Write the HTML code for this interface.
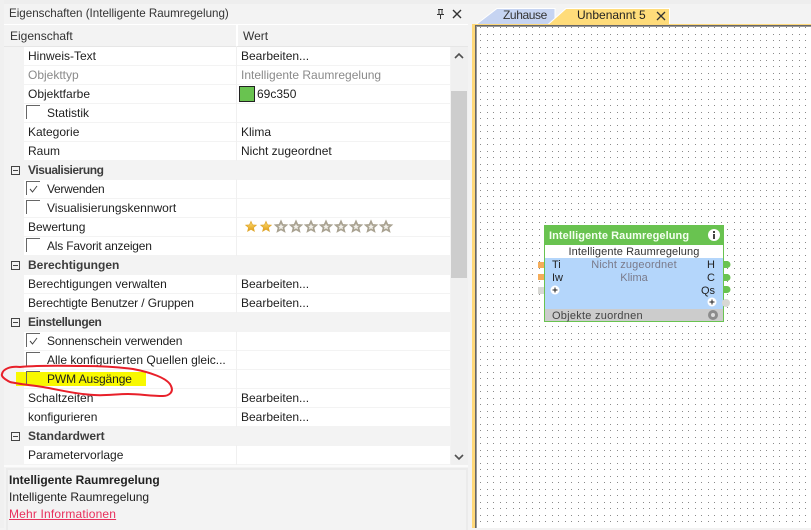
<!DOCTYPE html>
<html><head><meta charset="utf-8"><style>
html,body{margin:0;padding:0}
body{width:811px;height:528px;position:relative;overflow:hidden;background:#f3f3f3;font:12px/18px "Liberation Sans",sans-serif;color:#1e1e1e}
div,span{position:absolute;white-space:nowrap}
.r{left:24px;width:426px;height:18px;background:#fff}
.r::after{content:"";position:absolute;left:212px;top:-1px;height:20px;width:1px;background:#f0f0f0}
.n{left:4px;top:0}
.c{left:23px;top:0}
.v{left:217px;top:0}
.g{left:28px;font-weight:bold;color:#3c3c3c;height:18px}
.b{left:26px;top:2px;width:13px;height:13px;border-left:1px solid #666;border-top:1px solid #666}
.m{left:11px;width:7px;height:7px;border:1px solid #444}
.m::after{content:"";position:absolute;left:1px;top:3px;width:5px;height:1px;background:#444}
.b svg{position:absolute;left:2px;top:3px}
.gr{color:#8a8a8a}
.node{font:11px/13px "Liberation Sans",sans-serif}
</style></head><body>
<div style="left:0;top:0;width:811px;height:4px;background:#eeeeee"></div>
<div style="left:0;top:0;width:4px;height:528px;background:#f0f0f0"></div>
<div style="left:9px;top:5px;color:#333;font-size:11.6px">Eigenschaften (Intelligente Raumregelung)</div>
<svg style="position:absolute;left:434px;top:8px" width="34" height="12"><path d="M4 1.5h5M5 1.5v5M8 1.5v5M3 6.5h7M6.5 7v4" stroke="#333" fill="none"/><path d="M19 2l8 8M27 2l-8 8" stroke="#333" stroke-width="1.4" fill="none"/></svg>
<div style="left:4px;top:24px;width:464px;height:1px;background:#fff"></div>
<div style="left:236px;top:25px;width:2px;height:21px;background:#fff"></div>
<div style="left:10px;top:27px;color:#333">Eigenschaft</div>
<div style="left:243px;top:27px;color:#333">Wert</div>
<div style="left:4px;top:46px;width:464px;height:1px;background:#e6e6e6"></div>

<div class="r" style="top:47px"><span class="n">Hinweis-Text</span><span class="v">Bearbeiten...</span></div>
<div class="r gr" style="top:66px"><span class="n">Objekttyp</span><span class="v">Intelligente Raumregelung</span></div>
<div class="r" style="top:85px"><span class="n">Objektfarbe</span><span class="v" style="left:233px">69c350</span></div>
<div style="left:239px;top:86px;width:14px;height:14px;background:#69c350;border:1px solid #222"></div>
<div class="r" style="top:104px"><span class="c">Statistik</span></div><div class="b" style="top:105px"></div>
<div class="r" style="top:123px"><span class="n">Kategorie</span><span class="v">Klima</span></div>
<div class="r" style="top:142px"><span class="n">Raum</span><span class="v">Nicht zugeordnet</span></div>
<div class="m" style="top:166px"></div><div class="g" style="top:161px;letter-spacing:-.45px">Visualisierung</div>
<div class="r" style="top:180px"><span class="c" style="letter-spacing:-.3px">Verwenden</span></div><div class="b" style="top:181px"><svg width="9" height="8"><path d="M1 4l2.500 3L8 1" stroke="#444" fill="none"/></svg></div>
<div class="r" style="top:199px"><span class="c">Visualisierungskennwort</span></div><div class="b" style="top:200px"></div>
<div class="r" style="top:218px"><span class="n">Bewertung</span></div>
<svg style="position:absolute;left:243px;top:219px" width="152" height="16">
<defs><linearGradient id="au" x1="0" y1="0" x2="0" y2="1"><stop offset="0" stop-color="#ffe27a"/><stop offset="1" stop-color="#e09a10"/></linearGradient>
<path id="st" d="M8 2.500l1.500 3.400 3.700.3-2.800 2.400.9 3.600L8 10.300l-3.300 1.900.9-3.600-2.800-2.400 3.700-.3z"/></defs>
<use href="#st" fill="url(#au)" stroke="#e0a830" stroke-width=".8"/>
<use href="#st" x="15" fill="url(#au)" stroke="#e0a830" stroke-width=".8"/>
<g fill="#f2f0ea" stroke="#a8a190" stroke-width="1.7"><use href="#st" x="30"/><use href="#st" x="45"/><use href="#st" x="60"/><use href="#st" x="75"/><use href="#st" x="90"/><use href="#st" x="105"/><use href="#st" x="120"/><use href="#st" x="135"/></g></svg>
<div class="r" style="top:237px"><span class="c" style="letter-spacing:-.2px">Als Favorit anzeigen</span></div><div class="b" style="top:238px"></div>
<div class="m" style="top:261px"></div><div class="g" style="top:256px">Berechtigungen</div>
<div class="r" style="top:275px"><span class="n">Berechtigungen verwalten</span><span class="v">Bearbeiten...</span></div>
<div class="r" style="top:294px"><span class="n" style="letter-spacing:-.1px">Berechtigte Benutzer / Gruppen</span><span class="v">Bearbeiten...</span></div>
<div class="m" style="top:318px"></div><div class="g" style="top:313px;letter-spacing:-.4px">Einstellungen</div>
<div class="r" style="top:332px"><span class="c" style="letter-spacing:-.13px">Sonnenschein verwenden</span></div><div class="b" style="top:333px"><svg width="9" height="8"><path d="M1 4l2.500 3L8 1" stroke="#444" fill="none"/></svg></div>
<div class="r" style="top:351px"><span class="c">Alle konfigurierten Quellen gleic...</span></div><div class="b" style="top:352px"></div>
<div class="r" style="top:370px"></div>
<div style="left:16px;top:372px;width:130px;height:14px;background:#f8f800"></div>
<div style="left:47px;top:370px;letter-spacing:-.1px">PWM Ausgänge</div>
<div class="b" style="top:371px"></div>
<div class="r" style="top:389px"><span class="n">Schaltzeiten</span><span class="v">Bearbeiten...</span></div>
<div class="r" style="top:408px"><span class="n">konfigurieren</span><span class="v">Bearbeiten...</span></div>
<div class="m" style="top:432px"></div><div class="g" style="top:427px">Standardwert</div>
<div class="r" style="top:446px"><span class="n">Parametervorlage</span></div>
<svg style="position:absolute;left:0;top:360px" width="180" height="45"><path d="M20 7C45 5 65 6 83 6c20 0 36 1 50 3 16 3 35 9 38 17 3 6-2 10-8 10-12 0-24-2-35-2-12 0-23 2-34 1C75 34 60 30 43 27 30 25 18 24 10 22 4 19 1 16 2 14 3 9 10 6 20 7z" fill="none" stroke="#e8202a" stroke-width="2"/></svg>

<div style="left:451px;top:47px;width:17px;height:418px;background:#f0f0f0"></div>
<div style="left:451px;top:91px;width:16px;height:187px;background:#cdcdcd"></div>
<svg style="position:absolute;left:454px;top:52px" width="10" height="410"><path d="M1 6l4-4 4 4" stroke="#505050" stroke-width="1.600" fill="none"/><path d="M1 403l4 4 4-4" stroke="#505050" stroke-width="1.600" fill="none"/></svg>

<div style="left:4px;top:465px;width:464px;height:2px;background:#fbfbfb"></div>
<div style="left:6px;top:468px;width:458px;height:60px;border:solid #ebebeb;border-width:2px 2px 0 2px;background:#f3f3f3"></div>
<div style="left:9px;top:471px;font-weight:bold;color:#222">Intelligente Raumregelung</div>
<div style="left:9px;top:488px">Intelligente Raumregelung</div>
<div style="left:9px;top:505px;color:#e8305c;text-decoration:underline;letter-spacing:.17px">Mehr Informationen</div>

<svg style="position:absolute;left:470px;top:4px" width="341" height="24">
<path d="M6 20.500L27 4.500H85V20.500z" fill="#c6d4f2" stroke="#fff"/>
<path d="M78 20.500L96 4.500H199.500V20.500z" fill="#ffdc7a" stroke="#fff"/>
<path d="M187 8l8 8M195 8l-8 8" stroke="#333" stroke-width="1.300" fill="none"/>
</svg>
<div style="left:503px;top:6px;color:#333;letter-spacing:-.4px">Zuhause</div>
<div style="left:577px;top:6px;color:#222">Unbenannt 5</div>

<div style="left:472px;top:24px;width:339px;height:504px;background:#ffd97a"></div>
<div style="left:475px;top:25px;width:336px;height:503px;background:#666"></div>
<div style="left:476px;top:26px;width:335px;height:502px;background:#999"></div>
<svg style="position:absolute;left:477px;top:27px" width="334" height="501"><defs><pattern id="d" width="13" height="13" patternUnits="userSpaceOnUse" x="3" y="7"><rect width="1" height="1" fill="#8a8a8a"/><rect x="7" width="1" height="1" fill="#8a8a8a"/><rect y="6" width="1" height="1" fill="#8a8a8a"/><rect x="7" y="6" width="1" height="1" fill="#8a8a8a"/></pattern></defs><rect width="334" height="501" fill="#fff"/><rect width="334" height="501" fill="url(#d)"/></svg>

<div class="node" style="left:544px;top:225px;width:180px;height:97px;background:#69c350">
<div style="left:1px;top:20px;width:178px;height:13px;background:#fff"></div>
<div style="left:1px;top:33px;width:178px;height:51px;background:#b4d6fb"></div>
<div style="left:1px;top:84px;width:178px;height:12px;background:#cccccc"></div>
<div style="left:5px;top:4px;color:#f4fff0;font-weight:bold;letter-spacing:.08px;line-height:14px">Intelligente Raumregelung</div>
<div style="left:0;width:180px;text-align:center;top:20px;color:#333;letter-spacing:.1px;line-height:14px">Intelligente Raumregelung</div>
<div style="left:0;width:180px;text-align:center;top:33px;color:#7a7a8a;letter-spacing:.15px;line-height:14px">Nicht zugeordnet</div>
<div style="left:0;width:180px;text-align:center;top:46px;color:#7a7a8a;line-height:14px">Klima</div>
<div style="left:8px;top:33px;color:#222;line-height:14px">Ti</div>
<div style="left:8px;top:46px;color:#222;line-height:14px">Iw</div>
<div style="left:163px;top:33px;color:#222;line-height:14px">H</div>
<div style="left:163px;top:46px;color:#222;line-height:14px">C</div>
<div style="left:157px;top:59px;color:#222;line-height:14px">Qs</div>
<div style="left:8px;top:84px;color:#444;letter-spacing:.25px;line-height:14px">Objekte zuordnen</div>
<svg style="position:absolute;left:0;top:0" width="180" height="97">
<circle cx="170" cy="10" r="6" fill="#fff"/><rect x="169" y="9" width="2" height="5" fill="#444"/><rect x="169" y="6" width="2" height="2" fill="#444"/>
<circle cx="11" cy="65" r="4.500" fill="#fff"/><path d="M8.500 65h5M11 62.500v5" stroke="#222"/>
<circle cx="168" cy="77" r="4.500" fill="#fff"/><path d="M165.500 77h5M168 74.500v5" stroke="#222"/>
<circle cx="169" cy="90" r="5" fill="#8c8c8c"/><circle cx="169" cy="90" r="2" fill="#ddd"/>
</svg></div>
<svg style="position:absolute;left:536px;top:258px" width="200" height="52">
<rect x="2" y="4" width="6" height="6" fill="#f5ad5a"/><rect x="2" y="16" width="6" height="6" fill="#f5ad5a"/><rect x="2" y="29" width="6" height="7" fill="#d8d8d4"/>
<path d="M188 3h3a3.500 3.500 0 0 1 0 7h-3zM188 16h3a3.500 3.500 0 0 1 0 7h-3zM188 28h3a3.500 3.500 0 0 1 0 7h-3z" fill="#69c350"/>
<circle cx="190" cy="45" r="4" fill="#d8d8d4"/></svg>
</body></html>
